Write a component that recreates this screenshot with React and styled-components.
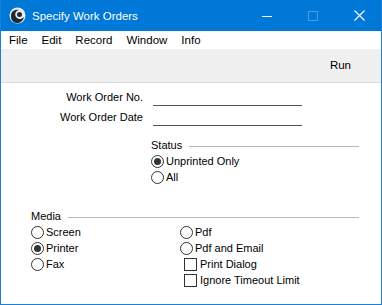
import React from "react";
import styled, { createGlobalStyle } from "styled-components";

const Global = createGlobalStyle`
  html, body { margin: 0; padding: 0; background: #fff; }
  body { font-family: "Liberation Sans", Arial, sans-serif; font-size: 11px; color: #000; }
`;

const Window = styled.div`
  width: 382px;
  height: 305px;
  box-sizing: border-box;
  border: 1px solid #1a7fd6;
  border-top: none;
  display: flex;
  flex-direction: column;
  background: #fff;
  overflow: hidden;
`;

const TitleBar = styled.div`
  height: 31px;
  margin: 0 -1px;
  background: #0078d7;
  display: flex;
  align-items: center;
  color: #fff;
  flex-shrink: 0;
`;

const AppIcon = styled.svg`
  width: 17px;
  height: 17px;
  margin-left: 9px;
  margin-right: 6px;
`;

const Title = styled.div`
  font-size: 11.5px;
  flex: 1;
`;

const WinButton = styled.div`
  width: 46px;
  height: 31px;
  display: flex;
  align-items: center;
  justify-content: center;
`;

const MenuBar = styled.div`
  height: 18px;
  display: flex;
  align-items: center;
  padding-left: 1px;
  flex-shrink: 0;
`;

const MenuItem = styled.div`
  font-size: 11.5px;
  padding: 0 7px;
  margin-right: ${p => p.$mr || 0}px;
`;

const Toolbar = styled.div`
  height: 33px;
  background: #f0f0f0;
  border-bottom: 1px solid #dcdcdc;
  display: flex;
  align-items: center;
  justify-content: flex-end;
  padding-right: 30px;
  flex-shrink: 0;
`;

const ToolButton = styled.div`
  font-size: 11.5px;
  margin-top: -1px;
`;

const Content = styled.div`
  padding-top: 4px;
  display: flex;
  flex-direction: column;
`;

const FieldRow = styled.div`
  display: grid;
  grid-template-columns: 142px 149px;
  column-gap: 10px;
  height: 20px;
  align-items: center;
`;

const FieldLabel = styled.div`
  text-align: right;
`;

const FieldInput = styled.div`
  height: 14px;
  border-bottom: 1px solid #555;
  margin-top: 2px;
`;

const Section = styled.div`
  margin-left: ${p => p.$left}px;
  margin-top: ${p => p.$top}px;
  width: ${p => p.$width}px;
  display: flex;
  flex-direction: column;
`;

const SectionHead = styled.div`
  display: flex;
  align-items: center;
  height: 16px;
  gap: 7px;
`;

const HeadLine = styled.div`
  flex: 1;
  height: 1px;
  background: #b9b9b9;
  margin-top: 3px;
`;

const Columns = styled.div`
  display: grid;
  grid-template-columns: 149px 1fr;
`;

const Column = styled.div`
  display: flex;
  flex-direction: column;
`;

const Option = styled.div`
  display: flex;
  align-items: center;
  height: 16px;
  padding-left: ${p => p.$indent || 0}px;
  gap: ${p => p.$gap || 2}px;
`;

const RadioCircle = styled.div`
  width: 11px;
  height: 11px;
  border: 1px solid #333;
  border-radius: 50%;
  background: #fff;
  display: flex;
  align-items: center;
  justify-content: center;
  flex-shrink: 0;
  &::after {
    content: "";
    width: 7px;
    height: 7px;
    border-radius: 50%;
    background: #333;
    display: ${p => (p.$on ? "block" : "none")};
  }
`;

const CheckBox = styled.div`
  width: 11px;
  height: 11px;
  border: 1px solid #333;
  background: #fff;
  flex-shrink: 0;
`;

const Radio = ({ on, children }) => (
  <Option>
    <RadioCircle $on={on} />
    <span>{children}</span>
  </Option>
);

const Check = ({ children }) => (
  <Option $indent={4} $gap={3}>
    <CheckBox />
    <span>{children}</span>
  </Option>
);

export default function App() {
  return (
    <>
      <Global />
      <Window>
        <TitleBar>
          <AppIcon viewBox="0 0 17 17">
            <circle cx="8.5" cy="8.5" r="8" fill="#e8eef3" />
            <path d="M2 9 C2 4 6 2 10 3 C6 4 5 8 8 11 C10 13 13 12 15 10 C14 14 11 16 8 16 C4 16 2 13 2 9 Z" fill="#1d2a36" />
            <circle cx="10.5" cy="7.5" r="2.5" fill="#1d2a36" />
          </AppIcon>
          <Title>Specify Work Orders</Title>
          <WinButton>
            <svg width="10" height="10" viewBox="0 0 10 10"><path d="M0 5.5 H10" stroke="#fff" strokeWidth="1" /></svg>
          </WinButton>
          <WinButton>
            <svg width="10" height="10" viewBox="0 0 10 10"><rect x="0.5" y="0.5" width="9" height="9" fill="none" stroke="#4aa0e6" strokeWidth="1" /></svg>
          </WinButton>
          <WinButton>
            <svg width="11" height="11" viewBox="0 0 11 11"><path d="M0.5 0.5 L10.5 10.5 M10.5 0.5 L0.5 10.5" stroke="#fff" strokeWidth="1.1" /></svg>
          </WinButton>
        </TitleBar>
        <MenuBar>
          <MenuItem>File</MenuItem>
          <MenuItem>Edit</MenuItem>
          <MenuItem>Record</MenuItem>
          <MenuItem>Window</MenuItem>
          <MenuItem>Info</MenuItem>
        </MenuBar>
        <Toolbar>
          <ToolButton>Run</ToolButton>
        </Toolbar>
        <Content>
          <FieldRow>
            <FieldLabel>Work Order No.</FieldLabel>
            <FieldInput />
          </FieldRow>
          <FieldRow>
            <FieldLabel>Work Order Date</FieldLabel>
            <FieldInput />
          </FieldRow>
          <Section $left={150} $top={10} $width={208}>
            <SectionHead>
              <span>Status</span>
              <HeadLine />
            </SectionHead>
            <Radio on>Unprinted Only</Radio>
            <Radio>All</Radio>
          </Section>
          <Section $left={30} $top={23} $width={328}>
            <SectionHead>
              <span>Media</span>
              <HeadLine />
            </SectionHead>
            <Columns>
              <Column>
                <Radio>Screen</Radio>
                <Radio on>Printer</Radio>
                <Radio>Fax</Radio>
              </Column>
              <Column>
                <Radio>Pdf</Radio>
                <Radio>Pdf and Email</Radio>
                <Check>Print Dialog</Check>
                <Check>Ignore Timeout Limit</Check>
              </Column>
            </Columns>
          </Section>
        </Content>
      </Window>
    </>
  );
}
